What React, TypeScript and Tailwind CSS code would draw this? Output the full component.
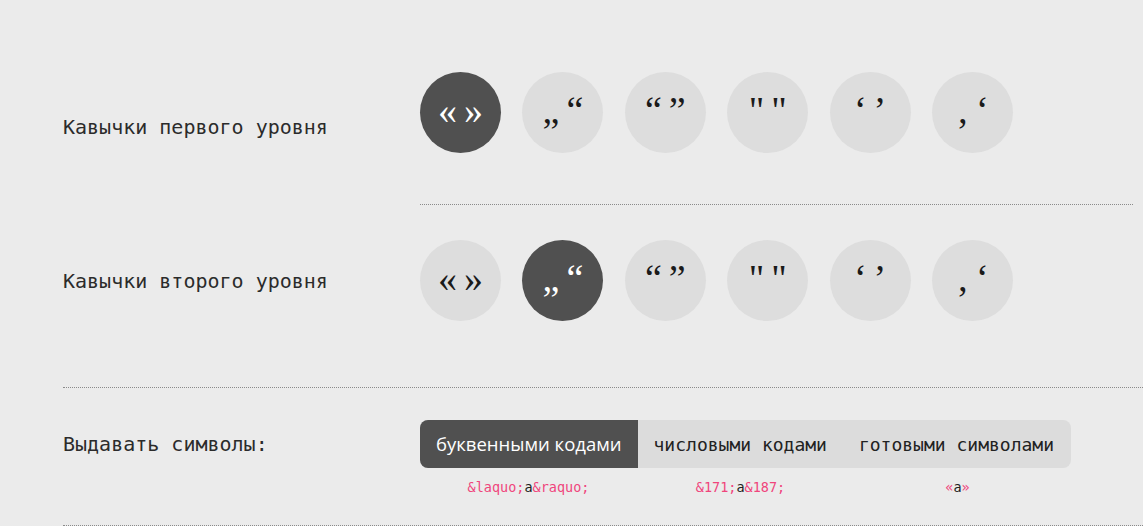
import React from 'react';

const quotes = [
    { open: '«', close: '»' },
    { open: '„', close: '“' },
    { open: '“', close: '”' },
    { open: '"', close: '"' },
    { open: '‘', close: '’' },
    { open: '‚', close: '‘' },
];

function QuoteCircle({ q, active }: { q: { open: string; close: string }; active: boolean }) {
    return (
        <div
            className={`w-[81px] h-[81px] rounded-full flex items-center justify-center shrink-0 ${
                active ? 'bg-[#505050] text-white' : 'bg-[#dddddd] text-[#1a1a1a]'
            }`}
        >
            <span className="font-['Liberation_Serif',serif] text-[38px] leading-none tracking-[7px] pl-[7px] -mt-[6px]">
                {q.open}
                {q.close}
            </span>
        </div>
    );
}

function QuoteRow({ active }: { active: number }) {
    return (
        <div className="flex gap-[21.4px]">
            {quotes.map((q, i) => (
                <QuoteCircle key={i} q={q} active={i === active} />
            ))}
        </div>
    );
}

const modes = [
    { label: 'буквенными кодами', code: ['&laquo;', 'a', '&raquo;'] },
    { label: 'числовыми кодами', code: ['&171;', 'a', '&187;'] },
    { label: 'готовыми символами', code: ['«', 'a', '»'] },
];

export default function App() {
    const label = "font-['DejaVu_Sans_Mono',monospace] text-[20px] leading-[24px] text-[#2b2b2b]";

    return (
        <div className="min-h-[526px] w-full bg-[#ebebeb] pl-[63px] overflow-hidden">
            {/* первый уровень */}
            <div className="flex">
                <div className={`w-[357px] shrink-0 pt-[115px] ${label}`}>Кавычки первого уровня</div>
                <div className="flex-1 mr-[10px] pt-[72px] pb-[51px] border-b border-dotted border-[#8a8a8a]">
                    <QuoteRow active={0} />
                </div>
            </div>

            {/* второй уровень */}
            <div className="flex border-b border-dotted border-[#8a8a8a]">
                <div className={`w-[357px] shrink-0 pt-[64px] ${label}`}>Кавычки второго уровня</div>
                <div className="flex-1 pt-[35px] pb-[66px]">
                    <QuoteRow active={1} />
                </div>
            </div>

            {/* символы */}
            <div className="flex border-b border-dotted border-[#8a8a8a] h-[138px]">
                <div className={`w-[357px] shrink-0 pt-[44px] ${label}`}>Выдавать символы:</div>
                <div className="pt-[32px]">
                    <div className="flex rounded-[8px] overflow-hidden bg-[#dcdcdc] h-[48px]">
                        {modes.map((m, i) => (
                            <div
                                key={i}
                                className={`px-4 flex items-center ${
                                    i === 0
                                        ? "bg-[#505050] text-white font-['Open_Sans',sans-serif] text-[18.5px]"
                                        : "text-[#222] font-['DejaVu_Sans_Mono',monospace] text-[18px]"
                                }`}
                            >
                                {m.label}
                            </div>
                        ))}
                    </div>
                    <div className="flex">
                        {modes.map((m, i) => (
                            <div
                                key={i}
                                className={`flex justify-center pt-[11px] font-['DejaVu_Sans_Mono',monospace] text-[13.5px] leading-[16px] ${
                                    i === 0 ? 'w-[217px]' : i === 1 ? 'w-[207px]' : 'w-[227px]'
                                }`}
                            >
                                <span className="text-[#f0457c]">{m.code[0]}</span>
                                <span className="text-[#222]">{m.code[1]}</span>
                                <span className="text-[#f0457c]">{m.code[2]}</span>
                            </div>
                        ))}
                    </div>
                </div>
            </div>
        </div>
    );
}
